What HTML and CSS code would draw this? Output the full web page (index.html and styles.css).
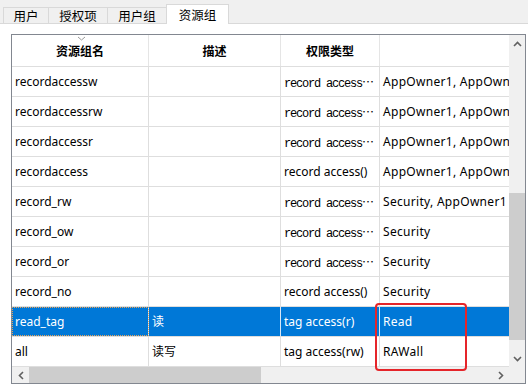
FILE: index.html
```html
<!DOCTYPE html>
<html lang="zh">
<head>
    <meta charset="UTF-8">
    <title>资源组</title>
    <link rel="stylesheet" href="styles.css">
</head>
<body>
    <div class="tabs">
        <div class="tab t1">用户</div>
        <div class="tab">授权项</div>
        <div class="tab">用户组</div>
        <div class="tab active">资源组</div>
    </div>

    <div class="panel">
        <div class="list">
            <div class="view">
                <div class="head">
                    <div class="c c1">资源组名
                        <svg class="sort" width="9" height="5" viewBox="0 0 9 5"><polyline points="1,1 4.5,4 8,1" fill="none" stroke="#9a9a9a" stroke-width="1"/></svg>
                    </div>
                    <div class="c c2">描述</div>
                    <div class="c c3">权限类型</div>
                    <div class="c c4"></div>
                </div>

                <div class="row">
                    <div class="c c1">recordaccessw</div>
                    <div class="c c2"></div>
                    <div class="c c3 mono">record access<span class="ell">…</span></div>
                    <div class="c c4">AppOwner1, AppOwner2</div>
                </div>
                <div class="row">
                    <div class="c c1">recordaccessrw</div>
                    <div class="c c2"></div>
                    <div class="c c3 mono">record access<span class="ell">…</span></div>
                    <div class="c c4">AppOwner1, AppOwner2</div>
                </div>
                <div class="row">
                    <div class="c c1">recordaccessr</div>
                    <div class="c c2"></div>
                    <div class="c c3 mono">record access<span class="ell">…</span></div>
                    <div class="c c4">AppOwner1, AppOwner2</div>
                </div>
                <div class="row">
                    <div class="c c1">recordaccess</div>
                    <div class="c c2"></div>
                    <div class="c c3">record access()</div>
                    <div class="c c4">AppOwner1, AppOwner2</div>
                </div>
                <div class="row">
                    <div class="c c1">record_rw</div>
                    <div class="c c2"></div>
                    <div class="c c3 mono">record access<span class="ell">…</span></div>
                    <div class="c c4">Security, AppOwner1</div>
                </div>
                <div class="row">
                    <div class="c c1">record_ow</div>
                    <div class="c c2"></div>
                    <div class="c c3 mono">record access<span class="ell">…</span></div>
                    <div class="c c4">Security</div>
                </div>
                <div class="row">
                    <div class="c c1">record_or</div>
                    <div class="c c2"></div>
                    <div class="c c3 mono">record access<span class="ell">…</span></div>
                    <div class="c c4">Security</div>
                </div>
                <div class="row">
                    <div class="c c1">record_no</div>
                    <div class="c c2"></div>
                    <div class="c c3">record access()</div>
                    <div class="c c4">Security</div>
                </div>
                <div class="row selected">
                    <div class="c c1 focus">read_tag</div>
                    <div class="c c2">读</div>
                    <div class="c c3">tag access(r)</div>
                    <div class="c c4">Read</div>
                </div>
                <div class="row last">
                    <div class="c c1">all</div>
                    <div class="c c2">读写</div>
                    <div class="c c3">tag access(rw)</div>
                    <div class="c c4">RAWall</div>
                </div>
            </div>

            <div class="vscroll">
                <div class="arrow">
                    <svg width="9" height="6" viewBox="0 0 9 6"><polyline points="1,5 4.5,1.5 8,5" fill="none" stroke="#606060" stroke-width="1.6"/></svg>
                </div>
                <div class="track"><div class="thumb"></div></div>
                <div class="arrow">
                    <svg width="9" height="6" viewBox="0 0 9 6"><polyline points="1,1 4.5,4.5 8,1" fill="none" stroke="#606060" stroke-width="1.6"/></svg>
                </div>
            </div>

            <div class="hscroll">
                <div class="arrow">
                    <svg width="6" height="9" viewBox="0 0 6 9"><polyline points="5,1 1.5,4.5 5,8" fill="none" stroke="#606060" stroke-width="1.6"/></svg>
                </div>
                <div class="track"><div class="thumb"></div></div>
                <div class="arrow">
                    <svg width="6" height="9" viewBox="0 0 6 9"><polyline points="1,1 4.5,4.5 1,8" fill="none" stroke="#606060" stroke-width="1.6"/></svg>
                </div>
            </div>

            <div class="corner"></div>
        </div>
    </div>

    <div class="mark"></div>
</body>
</html>
```

FILE: styles.css
```css
body {
    margin: 0;
    width: 528px;
    height: 385px;
    overflow: hidden;
    background: #fff;
    color: #000;
    font-family: "Noto Sans", "Noto Sans CJK SC", sans-serif;
    font-size: 12px;
}

/* tab strip */
.tabs {
    display: flex;
    align-items: flex-end;
    height: 23px;
    padding-left: 3px;
    background: #f0f0f0;
    border-bottom: 1px solid #d9d9d9;
}
.tab {
    box-sizing: border-box;
    width: 60px;
    height: 16px;
    margin-right: -1px;
    border: 1px solid #d9d9d9;
    border-bottom: none;
    background: #f0f0f0;
    font-family: "Noto Sans CJK SC", sans-serif;
    font-size: 12.5px;
    line-height: 15px;
    text-align: center;
}
.tab.t1 { width: 46px; }
.tab.active {
    position: relative;
    z-index: 1;
    width: 63px;
    height: 20px;
    margin-bottom: -1px;
    background: #fff;
    line-height: 19px;
}

.panel {
    height: 361px;
    box-sizing: border-box;
    padding: 10px 0 0 11px;
}

/* list view */
.list {
    display: grid;
    grid-template-columns: 497px 16px;
    grid-template-rows: 332px 16px;
    box-sizing: border-box;
    width: 515px;
    height: 350px;
    border: 1px solid #828790;
}
.view { overflow: hidden; }

.head, .row {
    display: flex;
    white-space: nowrap;
}
.head { height: 31px; }
.row {
    box-sizing: border-box;
    height: 30px;
    border-top: 1px solid #dedede;
}
.row.last {
    height: 31px;
    border-bottom: 1px solid #dedede;
}

.c {
    box-sizing: border-box;
    flex: none;
    overflow: hidden;
    padding-left: 3px;
    border-right: 1px solid #dedede;
    line-height: 29px;
}
.c1 { width: 137px; }
.c2 { width: 132px; }
.c3 { width: 99px; }
.c4 { width: 200px; border-right: none; letter-spacing: 0.3px; }

.head .c {
    position: relative;
    padding-left: 0;
    line-height: 31px;
    text-align: center;
    font-family: "Noto Sans CJK SC", sans-serif;
    font-weight: bold;
    border-right-color: #e5e5e5;
}
.head .c4 { border-right: none; }
.sort {
    position: absolute;
    top: 1px;
    left: 65px;
}

.mono {
    font-family: "Liberation Mono", monospace;
    font-size: 12px;
    letter-spacing: -1.2px;
}
.ell {
    font-family: "Noto Sans CJK SC", sans-serif;
    font-size: 12px;
    letter-spacing: 0;
}

.row.selected {
    background: #0078d7;
    color: #fff;
}
.row.selected .c { border-right-color: #d6e6f6; }
.focus {
    outline: 1px dotted #e8a45a;
    outline-offset: -1px;
}

/* scrollbars */
.vscroll, .hscroll {
    display: flex;
    background: #f0f0f0;
}
.vscroll { flex-direction: column; }
.arrow {
    display: flex;
    align-items: center;
    justify-content: center;
    flex: none;
    width: 16px;
    height: 17px;
}
.hscroll .arrow { width: 17px; height: 16px; }
.track { flex: 1; }
.thumb { background: #cdcdcd; }
.vscroll .thumb {
    height: 147px;
    margin-top: 141px;
}
.hscroll .thumb {
    width: 232px;
    height: 16px;
}
.corner { background: #f0f0f0; }

/* red annotation */
.mark {
    position: absolute;
    left: 375px;
    top: 303px;
    box-sizing: border-box;
    width: 92px;
    height: 68px;
    border: 2px solid #e5252a;
    border-radius: 4px;
}
```
